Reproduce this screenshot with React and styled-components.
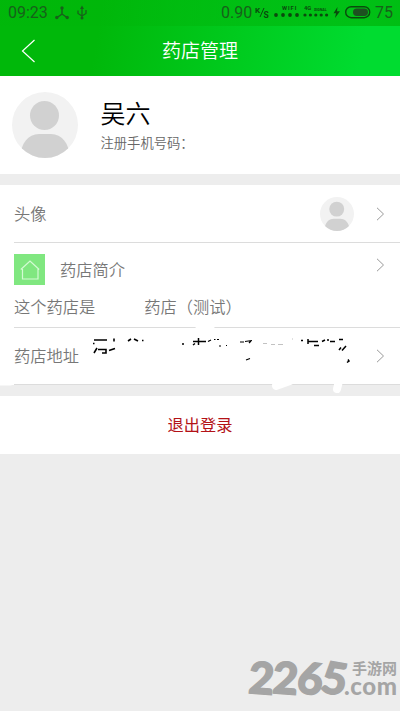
import styled, { createGlobalStyle } from "styled-components";

const GlobalStyle = createGlobalStyle`
  * {
    box-sizing: border-box;
  }
  body {
    margin: 0;
    background-color: #ededed;
    font-family: "Noto Sans CJK SC", sans-serif;
    font-weight: 350;
  }
  svg {
    display: block;
    flex-shrink: 0;
  }
`;

const Page = styled.div`
  display: flex;
  flex-direction: column;
  width: 400px;
  height: 711px;
  overflow: hidden;
  background-color: #ededed;
`;

const TopArea = styled.div`
  flex-shrink: 0;
  height: 76px;
  background: linear-gradient(100deg, #00b80a 25%, #00dc30 90%);
`;

const StatusBar = styled.div`
  display: flex;
  align-items: center;
  height: 26px;
  padding: 0 7px 0 8px;
  background: linear-gradient(90deg, rgba(0, 182, 8, 0.2), rgba(0, 180, 10, 0.75));
  color: #17611a;
  font-family: Roboto, sans-serif;
  font-weight: 400;
  font-size: 16px;
  line-height: 26px;
`;

const Clock = styled.span`
  width: 46px;
`;

const Speed = styled.span`
  margin-left: auto;
  width: 34px;
`;

const Battery = styled.span`
  width: 18px;
`;

const Header = styled.header`
  display: grid;
  grid-template-columns: 60px 1fr 60px;
  align-items: center;
  height: 50px;
  padding-bottom: 3px;
  color: #fff;
`;

const BackButton = styled.div`
  padding: 3px 0 0 21px;
`;

const Title = styled.div`
  text-align: center;
  font-size: 19px;
  line-height: 28px;
`;

const Profile = styled.section`
  display: flex;
  flex-shrink: 0;
  height: 98px;
  padding: 16px 12px;
  background-color: #fff;
`;

const ProfileText = styled.div`
  margin-left: 22.5px;
`;

const Name = styled.div`
  margin-top: 2px;
  color: #000;
  font-size: 25px;
  line-height: 37px;
`;

const Phone = styled.div`
  color: #666;
  font-size: 13.3px;
  line-height: 24px;
`;

const List = styled.section`
  flex-shrink: 0;
  height: 200px;
  margin-top: 11px;
  background-color: #fff;
  color: #777;
  font-size: 16.25px;
  line-height: 24px;
`;

const Row = styled.div`
  display: flex;
  align-items: center;
  height: ${(props) => props.$height}px;
  margin-left: 14px;
  padding-right: 15px;
  border-bottom: 1px solid #dcdcdc;
`;

const Label = styled.span`
  margin-bottom: 2px;
`;

const Intro = styled.div`
  height: 85px;
  margin-left: 14px;
  padding: 11px 15px 0 0;
  border-bottom: 1px solid #dcdcdc;
`;

const IntroHead = styled.div`
  display: flex;
  align-items: center;
  height: 31px;
`;

const HouseBox = styled.div`
  display: flex;
  align-items: center;
  justify-content: center;
  width: 31px;
  height: 31px;
  margin-right: 15px;
  background-color: #80e780;
`;

const IntroText = styled.div`
  display: flex;
  margin-top: 9px;
`;

const Erased = styled.div`
  width: 49px;
`;

const RowEnd = styled.div`
  display: flex;
  align-items: center;
  gap: 22px;
  margin-left: auto;
  margin-top: ${(props) => props.$shift || 0}px;
`;

const Address = styled.div`
  height: 57px;
  margin-left: 9px;
`;

const Logout = styled.div`
  flex-shrink: 0;
  height: 58px;
  margin-top: 11px;
  background-color: #fff;
  color: #b31217;
  font-size: 16.25px;
  font-weight: 400;
  line-height: 56px;
  text-align: center;
`;

const Watermark = styled.div`
  display: flex;
  align-items: flex-start;
  margin: auto 0 11px 249px;
  height: 42px;
  color: #a5a5a5;
`;

const Digits = styled.div`
  display: flex;
  width: 98px;
  font-family: Lato, sans-serif;
  font-weight: 900;
  font-size: 44px;
  line-height: 38px;
  -webkit-text-stroke: 1.4px #a5a5a5;
`;

const Digit = styled.span`
  width: 24.3px;
  transform: rotate(${(props) => props.$turn}deg);
`;

const Site = styled.div`
  display: flex;
  flex-direction: column;
  font-weight: 700;
`;

const SiteName = styled.span`
  margin: 2px 0 0 5px;
  font-size: 15px;
  line-height: 15px;
  white-space: nowrap;
`;

const Domain = styled.span`
  margin: 3px 0 0 -3px;
  font-family: Lato, sans-serif;
  font-weight: 900;
  font-size: 24px;
  line-height: 16px;
  letter-spacing: 0.6px;
`;

const Avatar = ({ size }) => (
  <svg width={size} height={size} viewBox="0 0 66 66">
    <clipPath id={`face${size}`}>
      <circle cx="33" cy="33" r="33" />
    </clipPath>
    <g clipPath={`url(#face${size})`}>
      <rect width="66" height="66" fill="#f2f2f2" />
      <circle cx="32.5" cy="23.5" r="14.5" fill="#d1d1d1" />
      <path d="M8 66C9 51 16 42 27 42H39C50 42 57 51 58 66Z" fill="#d1d1d1" />
    </g>
  </svg>
);

const Chevron = () => (
  <svg width="9" height="14" fill="none" stroke="#999" strokeWidth="1">
    <path d="M1 .8 7.5 7 1 13.2" />
  </svg>
);

const StatusIcons = () => (
  <svg width="36" height="18" fill="none" stroke="#17611a" strokeWidth="1.5">
    <path d="M8 4V10L3 13.5M8 10 13 13.5" />
    <g fill="#17611a" stroke="none">
      <circle cx="8" cy="4" r="1.7" />
      <circle cx="2.8" cy="13.5" r="1.7" />
      <circle cx="13.2" cy="13.5" r="1.7" />
      <path d="M28 1.5 30 5H26Z" />
      <circle cx="28" cy="14" r="1.5" />
    </g>
    <path d="M28 4V14M24 6.5V9.5L28 12M32 6V9.5L28 12" strokeWidth="1.3" />
  </svg>
);

const SignalIcons = () => (
  <svg width="120" height="26" viewBox="0 0 120 26" fill="#0a4a0d">
    <g fontFamily="Roboto" fontWeight="700">
      <text x="0" y="12.5" fontSize="8">K</text>
      <text x="8.5" y="18" fontSize="8.5">S</text>
      <text x="27" y="10.2" fontSize="5.8" letterSpacing=".9">WIFI</text>
      <text x="49" y="10.2" fontSize="5.8">4G</text>
      <text x="59" y="10.8" fontSize="3.6">SIGNAL</text>
    </g>
    <path d="M5 17 9 8" stroke="#0a4a0d" />
    {[21, 28, 35, 42].map((x) => (
      <circle key={x} cx={x} cy="15" r="1.9" />
    ))}
    {[50, 55.4, 60.8, 66.2, 71.6].map((x) => (
      <circle key={x} cx={x} cy="15" r="1.6" />
    ))}
    <path d="M82.5 7 78.5 13.3H81L80 18 85 11.3H82Z" />
    <rect x="90.7" y="6.7" width="24" height="11" rx="5.5" fill="none" stroke="#0a4a0d" strokeWidth="1.4" />
    <rect x="98" y="8.5" width="15" height="7.4" rx="3.7" fill="#1d5020" />
  </svg>
);

// what is left of the address after it was wiped out, with the brush marks
const AddressRemains = () => (
  <svg width="270" height="57" viewBox="88 328 270 57" overflow="visible" fill="none" stroke="#000">
    <g stroke="#fff" strokeWidth="8" strokeLinecap="round">
      <path d="M198 327H212" strokeWidth="5" />
      <path d="M276 386 290 381M339 381 337 389" />
      <path d="M0 382H10" strokeWidth="7" />
    </g>
    <path d="M94 340H107M114 338.5V341.5M128 341 131 339M134 339 138 341M142 340.5H143.5" strokeWidth="1.6" />
    <path d="M93 343.5H94.5M94 353 97 348M98 349.5H106V353H102M109 350.5 115 348.5" strokeWidth="1.6" />
    <path d="M182 344H184M193 341.5H206M198.5 338V345M193 345 195 343.5" strokeWidth="1.5" />
    <path d="M208 341.5 211 340M214 339.5H215.5M217 339.5H219M219 346H221M226 345.5H227M240 342H244M245 341.5 252 340.5M249 343 251 341M246 360 250 358.5" strokeWidth="1.2" />
    <path d="M263 343.5H267M271 344.5H275M278 344.5H283M292 339H293" strokeWidth=".6" stroke="#999" />
    <path d="M301 340.5H303M308 341.5H318M308 339V344M314 345.5H319M322 341.5 325 340M327 340H329M330 341.5H335M339 339.5H343M339 350 341 347.5M342 350.5 346 346M348 359.5 349 361 347 362.5" strokeWidth="1.5" />
  </svg>
);

const App = () => {
  return (
    <Page>
      <GlobalStyle />
      <TopArea>
        <StatusBar>
          <Clock>09:23</Clock>
          <StatusIcons />
          <Speed>0.90</Speed>
          <SignalIcons />
          <Battery>75</Battery>
        </StatusBar>
        <Header>
          <BackButton>
            <svg width="15" height="24" fill="none" stroke="#fff" strokeWidth="1.2">
              <path d="M13.5 1 1.5 12 13.5 23" />
            </svg>
          </BackButton>
          <Title>药店管理</Title>
        </Header>
      </TopArea>
      <Profile>
        <Avatar size={66} />
        <ProfileText>
          <Name>吴六</Name>
          <Phone>注册手机号码：</Phone>
        </ProfileText>
      </Profile>
      <List>
        <Row $height={58}>
          <Label>头像</Label>
          <RowEnd>
            <Avatar size={34} />
            <Chevron />
          </RowEnd>
        </Row>
        <Intro>
          <IntroHead>
            <HouseBox>
              <svg width="20" height="20" fill="none" stroke="#d4fbd4" strokeWidth="1.2">
                <path d="M.8 9.5 10 1 19.2 9.5M2.5 9V19H18V9" />
              </svg>
            </HouseBox>
            <Label>药店简介</Label>
            <RowEnd $shift={-9}>
              <Chevron />
            </RowEnd>
          </IntroHead>
          <IntroText>
            <span>这个药店是</span>
            <Erased />
            <span>药店（测试）</span>
          </IntroText>
        </Intro>
        <Row $height={57}>
          <Label>药店地址</Label>
          <Address>
            <AddressRemains />
          </Address>
          <RowEnd>
            <Chevron />
          </RowEnd>
        </Row>
      </List>
      <Logout>退出登录</Logout>
      <Watermark>
        <Digits>
          <Digit $turn={4}>2</Digit>
          <Digit $turn={4}>2</Digit>
          <Digit $turn={8}>6</Digit>
          <Digit $turn={10}>5</Digit>
        </Digits>
        <Site>
          <SiteName>手游网</SiteName>
          <Domain>.com</Domain>
        </Site>
      </Watermark>
    </Page>
  );
};

export default App;
